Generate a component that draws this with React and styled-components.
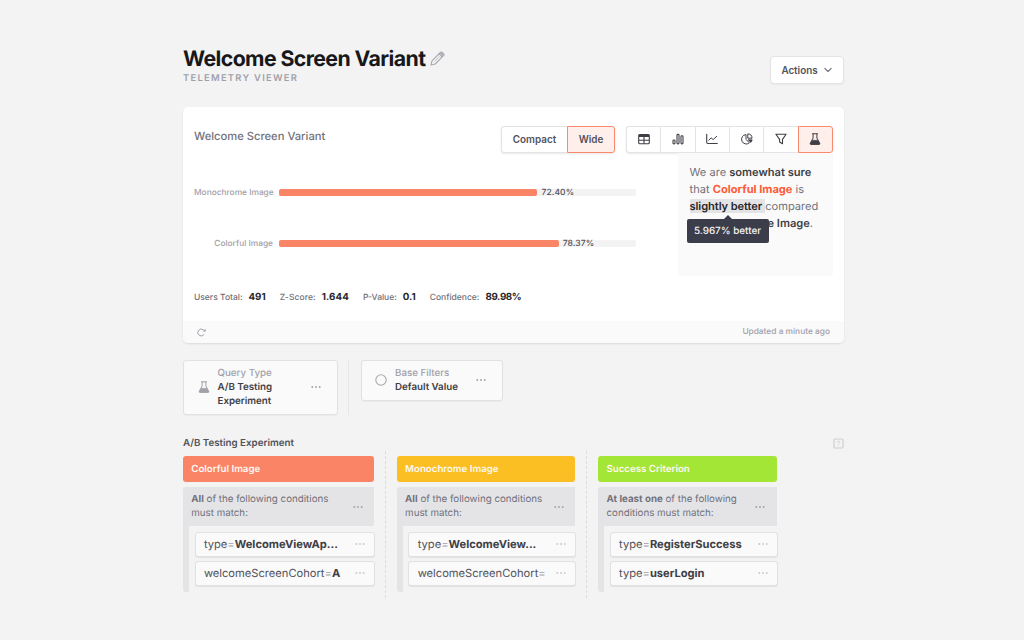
import React from 'react';
import styled, { createGlobalStyle, css } from 'styled-components';

const Global = createGlobalStyle`
  * { box-sizing: border-box; }
  body {
    margin: 0;
    background: #f3f3f3;
    font-family: Inter, "Liberation Sans", sans-serif;
    color: #3f3f46;
    -webkit-font-smoothing: antialiased;
    text-rendering: geometricPrecision;
  }
`;

const Page = styled.main`
  width: 661px;
  height: 640px;
  margin-left: 183px;
  padding-top: 45px;
  overflow: visible;
`;

const Header = styled.header`
  display: flex;
  justify-content: space-between;
  height: 62px;
`;
const TitleRow = styled.div`
  display: flex;
  align-items: center;
  gap: 4.5px;
  height: 26px;
`;
const Title = styled.h1`
  margin: 0;
  padding-top: 1px;
  font-size: 21.3px;
  line-height: 26px;
  font-weight: 700;
  letter-spacing: -0.6px;
  color: #18181b;
  white-space: nowrap;
`;
const Subtitle = styled.div`
  margin-top: 1px;
  font-size: 9.4px;
  line-height: 13px;
  font-weight: 600;
  letter-spacing: 1.28px;
  color: #a1a1aa;
`;
const ActionsButton = styled.button`
  display: flex;
  align-items: center;
  justify-content: center;
  gap: 6px;
  width: 74px;
  height: 28px;
  margin: 11px 0 0;
  padding: 0 1px 0 0;
  border: 1px solid #e4e4e7;
  border-radius: 4px;
  background: #fff;
  box-shadow: 0 1px 2px #0000000d;
  font: 600 9.85px Inter, sans-serif;
  color: #52525b;
`;

const Card = styled.section`
  height: 236px;
  border-radius: 5px;
  background: #fff;
  box-shadow: 0 1px 2px #0000001c;
  overflow: hidden;
`;
const CardTop = styled.div`
  display: flex;
  align-items: flex-start;
  height: 46px;
  padding: 19px 11px 0 11px;
`;
const CardTitle = styled.h2`
  flex: 1;
  margin: 0;
  padding-top: 1px;
  font-size: 11.2px;
  line-height: 18px;
  font-weight: 500;
  color: #71717a;
`;
const Segments = styled.div`
  display: flex;
  height: 27px;
  margin-left: ${(p) => p.$gap || 0}px;
  border-radius: 3px;
  background: #fff;
  box-shadow: 0 1px 2px #00000017;
`;
const Segment = styled.button`
  display: flex;
  align-items: center;
  justify-content: center;
  width: ${(p) => p.$w}px;
  height: 27px;
  margin: 0;
  padding: 0 0 1px;
  border: 1px solid #e4e4e7;
  border-right-width: 0;
  background: #fff;
  font: 600 9.9px Inter, sans-serif;
  color: #52525b;
  &:first-child { border-radius: 3px 0 0 3px; }
  ${(p) => p.$active && css`
    border: 1px solid #fa8a6b;
    border-radius: 0 3px 3px 0;
    background: #ffefeb;
  `}
`;
const CardBody = styled.div`
  display: flex;
  justify-content: space-between;
  height: 123px;
  padding: 0 11px 0 11px;
`;
const Chart = styled.div`
  width: 442px;
  padding-top: 32px;
`;
const BarRow = styled.div`
  display: flex;
  align-items: center;
  height: 14px;
  margin-bottom: 37.5px;
`;
const BarLabel = styled.div`
  flex: none;
  width: 79px;
  margin-right: 6px;
  padding-top: 1px;
  line-height: 12px;
  text-align: right;
  white-space: nowrap;
  font-size: 8.35px;
  font-weight: 500;
  color: #a1a1aa;
`;
const Track = styled.div`
  display: flex;
  align-items: center;
  width: 357px;
  height: 7px;
  border-radius: 2px;
  background: #f3f3f3;
`;
const Fill = styled.div`
  height: 7px;
  border-radius: 2px;
  background: #fa8466;
`;
const Percent = styled.span`
  margin-left: 4px;
  padding-top: 1px;
  line-height: 12px;
  font-size: 8.5px;
  font-weight: 500;
  letter-spacing: 0.1px;
  color: #52525b;
`;

const Verdict = styled.div`
  width: 155px;
  height: 123px;
  padding: 11px 0 0 11.5px;
  border-radius: 0 0 3px 3px;
  background: #fafafa;
  font-size: 11.1px;
  line-height: 17px;
  color: #71717a;
  white-space: nowrap;
  strong { font-weight: 600; color: #3f3f46; }
`;
const Winner = styled.b`
  font-weight: 700;
  color: #ff5a36;
`;
const Marked = styled.span`
  position: relative;
  display: inline-block;
  height: 14px;
  line-height: 14px;
  padding-right: 3px;
  background: #e4e4e7;
  font-weight: 600;
  letter-spacing: -0.07px;
  color: #27272a;
`;
const Tooltip = styled.span`
  position: absolute;
  left: -3px;
  top: 20px;
  width: 82px;
  height: 24px;
  line-height: 25px;
  border-radius: 2px;
  background: #3b3d4a;
  color: #f4f4f5;
  font-size: 9.9px;
  font-weight: 500;
  letter-spacing: 0;
  text-align: center;
  &::before {
    content: '';
    position: absolute;
    left: 36px;
    top: -4px;
    border: 5px solid transparent;
    border-top: 0;
    border-bottom-color: #3b3d4a;
  }
`;

const Stats = styled.div`
  display: flex;
  align-items: center;
  height: 45px;
  padding: 0 11px 3px;
`;
const Stat = styled.div`
  display: flex;
  align-items: baseline;
  gap: 6px;
  margin-right: 14px;
  white-space: nowrap;
  font-size: 8.5px;
  font-weight: 500;
  color: #71717a;
  b { font-size: 9.75px; font-weight: 700; color: #27272a; }
  &:nth-child(2) { letter-spacing: 0.1px; }
  &:last-child b { letter-spacing: -0.35px; }
`;
const CardFooter = styled.footer`
  display: flex;
  align-items: center;
  justify-content: space-between;
  height: 22px;
  padding: 0 14px;
  background: #fafafa;
  font-size: 8.35px;
  font-weight: 500;
  color: #a1a1aa;
`;

const Queries = styled.section`
  display: flex;
  align-items: flex-start;
  margin-top: 16.5px;
  height: 55px;
`;
const QueryCard = styled.div`
  display: flex;
  align-items: center;
  width: ${(p) => p.$w}px;
  height: ${(p) => p.$h}px;
  padding: 0 16.5px 0 13.5px;
  border: 1px solid #e1e1e4;
  border-radius: 3px;
  background: #fafafa;
  box-shadow: 0 1px 1px #00000008;
`;
const QueryText = styled.div`
  flex: 1;
  margin-left: 8px;
  padding-top: 1px;
  font-size: 9.75px;
  line-height: 14px;
  font-weight: 500;
  color: #a1a1aa;
  strong { display: block; width: 76px; font-weight: 600; color: #3f3f46; }
`;
const Separator = styled.div`
  width: 1px;
  height: 55px;
  margin: 0 11.5px 0 10px;
  background: #e6e6e8;
`;

const ExperimentHead = styled.div`
  display: flex;
  align-items: center;
  justify-content: space-between;
  height: 14px;
  margin-top: 21.5px;
  font-size: 9.75px;
  line-height: 14px;
  font-weight: 600;
  color: #52525b;
  span { padding-top: 1px; }
`;
const Columns = styled.section`
  display: flex;
  align-items: flex-start;
`;
const Column = styled.div`
  width: ${(p) => p.$w}px;
  padding-top: 6px;
`;
const Dotted = styled.div`
  height: 147px;
  margin: 1px 10.8px 0 11px;
  border-left: 1px dashed #dcdcdf;
`;
const ColumnTitle = styled.div`
  height: 25.5px;
  padding-left: 8.3px;
  border-radius: 3px;
  background: ${(p) => p.$color};
  font-size: 9.7px;
  line-height: 27px;
  font-weight: 600;
  color: #fff8f2;
`;
const Condition = styled.div`
  display: flex;
  align-items: center;
  justify-content: space-between;
  height: 39px;
  margin-top: 5.5px;
  padding: 0 11.5px 0 8.3px;
  border-radius: 3px 0 0 0;
  background: #e4e4e7;
  color: #71717a;
`;
const ConditionText = styled.div`
  padding-top: 1.5px;
`;
const ConditionLine = styled.div`
  font-size: 9.75px;
  line-height: 14px;
  white-space: nowrap;
  b { font-weight: 700; }
`;
const Rules = styled.div`
  display: flex;
  flex-direction: column;
  gap: 4px;
  height: 66px;
  margin-right: -1px;
  padding: 5.5px 0 0 5.6px;
  border-left: 6px solid #e4e4e7;
  border-radius: 0 0 0 3px;
`;
const Rule = styled.div`
  display: flex;
  align-items: center;
  justify-content: space-between;
  height: 25px;
  padding: 0 9px 0 8.3px;
  border: 1px solid #e1e1e4;
  border-radius: 3px;
  background: #fafafa;
  box-shadow: 0 1px 1px #00000012;
  font-size: 11.15px;
  white-space: nowrap;
  color: #52525b;
  i { font-style: normal; color: #a1a1aa; }
  b { font-weight: 700; color: #3f3f46; }
`;

const Dots = ({ color = '#a1a1aa' }) => (
  <svg width="10" height="4" viewBox="0 0 10 4" fill={color}>
    <circle cx="1.3" cy="2" r="0.95" />
    <circle cx="5" cy="2" r="0.95" />
    <circle cx="8.7" cy="2" r="0.95" />
  </svg>
);
const Pencil = () => (
  <svg width="15" height="15" viewBox="0 0 15 15" fill="none" stroke="#a8a8b0" strokeWidth="1.1" strokeLinejoin="round">
    <path d="M1 14l1-4.2L10.3 1.5a1.5 1.5 0 0 1 2.1 0l1.1 1.1a1.5 1.5 0 0 1 0 2.1L5.2 13z" />
    <path d="M9 2.8l3.2 3.2" />
    <path d="M4.6 10.4l5.2-5.2" strokeWidth="0.6" />
    <path d="M10.6 2l2.4 2.4" strokeWidth="1.8" />
  </svg>
);
const Flask = ({ size = 12, color = '#3f3f46' }) => (
  <svg width={size} height={size} viewBox="0 0 12 12" fill="none" stroke={color} strokeLinejoin="round">
    <path d="M3 .8h6" strokeWidth="1.1" />
    <path d="M4.1 1v4L1.3 10.4q-.3 1 .7 1h8q1 0 .7-1L7.9 5V1" strokeWidth="1" />
    <path d="M3 7.2h6l1.6 3.4q.2.7-.6.7H2q-.8 0-.6-.7z" fill={color} strokeWidth=".4" />
  </svg>
);
const TableIcon = () => (
  <svg width="12" height="12" viewBox="0 0 12 12" fill="none" stroke="#3f3f46">
    <rect x=".7" y="1.5" width="10.6" height="9.2" rx="1" strokeWidth="1.1" />
    <path d="M.8 2.8h10.4" strokeWidth="2.2" />
    <path d="M.8 7.2h10.4M6 3v7.7" strokeWidth="1.1" />
  </svg>
);
const BarsIcon = () => (
  <svg width="12" height="12" viewBox="0 0 12 12" fill="none" stroke="#3f3f46" strokeWidth="1.1">
    <rect x="1" y="7" width="2" height="3.9" rx=".8" />
    <rect x="5" y="1.4" width="2" height="9.5" rx=".8" />
    <rect x="9" y="2.8" width="2" height="8.1" rx=".8" />
  </svg>
);
const LineIcon = () => (
  <svg width="12" height="12" viewBox="0 0 12 12" fill="none" stroke="#3f3f46" strokeLinecap="round" strokeLinejoin="round">
    <path d="M.7 1.3v8q0 1.2 1.2 1.2h9.4" strokeWidth="1.1" />
    <path d="M2.8 7.2l2.3-2.4 2 1.8 3.6-3.3" strokeWidth="1" />
  </svg>
);
const PieIcon = () => (
  <svg width="12" height="12" viewBox="0 0 12 12" fill="none" stroke="#3f3f46" strokeLinejoin="round">
    <path d="M5 1.6a4.7 4.7 0 1 0 3.4 8.2L5 6.4z" />
    <path d="M6.8.9v4.3h4.2A4.3 4.3 0 0 0 6.8.9z" />
    <path d="M7 6.7h4.2a4.6 4.6 0 0 1-1.3 2.8z" fill="#3f3f46" strokeWidth=".6" />
  </svg>
);
const FunnelIcon = () => (
  <svg width="12" height="12" viewBox="0 0 12 12" fill="none" stroke="#3f3f46" strokeWidth="1.1" strokeLinejoin="round">
    <path d="M.9 1.2h10.2L7.5 6.4v4.4L4.6 9V6.4z" />
  </svg>
);
const Chevron = () => (
  <svg width="8" height="6" viewBox="0 0 8 6" fill="none" stroke="#71717a" strokeWidth="1.1" strokeLinecap="round" strokeLinejoin="round">
    <path d="M.8 1.3L4 4.5l3.2-3.2" />
  </svg>
);
const Refresh = () => (
  <svg width="9" height="9" viewBox="0 0 9 9" fill="none" stroke="#a1a1aa" strokeWidth="1">
    <path d="M7.1 6.3A3.4 3.4 0 1 1 6.4 1.9L7.6 3" />
    <path d="M8.6.7v2.9H5.7z" fill="#a1a1aa" stroke="none" />
  </svg>
);
const Ring = () => (
  <svg width="12" height="12" viewBox="0 0 12 12" fill="none" stroke="#a9a9b1" strokeWidth="1.1">
    <circle cx="6" cy="6" r="5.2" />
  </svg>
);
const Help = () => (
  <svg width="11" height="11" viewBox="0 0 11 11" fill="none" stroke="#cfcfd3">
    <rect x="1" y="1" width="9" height="9" rx="1" strokeWidth="1.2" />
    <path d="M4.1 4.3q.1-1.2 1.4-1.2t1.4 1.1q0 .8-1.4 1.5v.6M5.5 7.2v.9" strokeWidth=".9" />
  </svg>
);

const bars = [
  { label: 'Monochrome Image', value: 72.4 },
  { label: 'Colorful Image', value: 78.37 },
];
const stats = [
  ['Users Total:', '491'],
  ['Z-Score:', '1.644'],
  ['P-Value:', '0.1'],
  ['Confidence:', '89.98%'],
];
const views = [TableIcon, BarsIcon, LineIcon, PieIcon, FunnelIcon, Flask];
const columns = [
  {
    title: 'Colorful Image', color: '#fa8466', width: 191, match: 'All', lines: [' of the following conditions', 'must match:'],
    rules: [['type', 'WelcomeViewAp...'], ['welcomeScreenCohort', 'A']],
  },
  {
    title: 'Monochrome Image', color: '#fbbf24', width: 178.6, match: 'All', lines: [' of the following conditions', 'must match:'],
    rules: [['type', 'WelcomeView...'], ['welcomeScreenCohort', '']],
  },
  {
    title: 'Success Criterion', color: '#a3e635', width: 178.7, match: 'At least one', lines: [' of the following', 'conditions must match:'],
    rules: [['type', 'RegisterSuccess'], ['type', 'userLogin']],
  },
];

export default function App() {
  return (
    <>
      <Global />
      <Page>
        <Header>
          <div>
            <TitleRow>
              <Title>Welcome Screen Variant</Title>
              <Pencil />
            </TitleRow>
            <Subtitle>TELEMETRY VIEWER</Subtitle>
          </div>
          <ActionsButton>Actions <Chevron /></ActionsButton>
        </Header>

        <Card>
          <CardTop>
            <CardTitle>Welcome Screen Variant</CardTitle>
            <Segments>
              <Segment $w={66}>Compact</Segment>
              <Segment $w={48} $active>Wide</Segment>
            </Segments>
            <Segments $gap={11}>
              {views.map((Icon, i) => (
                <Segment key={i} $w={i === 5 ? 35.5 : 34.3} $active={i === 5}><Icon /></Segment>
              ))}
            </Segments>
          </CardTop>
          <CardBody>
            <Chart>
              {bars.map((bar) => (
                <BarRow key={bar.label}>
                  <BarLabel>{bar.label}</BarLabel>
                  <Track>
                    <Fill style={{ width: `${bar.value}%` }} />
                    <Percent>{bar.value.toFixed(2)}%</Percent>
                  </Track>
                </BarRow>
              ))}
            </Chart>
            <Verdict>
              We are <strong>somewhat sure</strong><br />
              that <Winner>Colorful Image</Winner> is<br />
              <Marked>slightly better<Tooltip>5.967% better</Tooltip></Marked>compared<br />
              to <strong>Monochrome Image</strong>.
            </Verdict>
          </CardBody>
          <Stats>
            {stats.map(([label, value]) => (
              <Stat key={label}>{label} <b>{value}</b></Stat>
            ))}
          </Stats>
          <CardFooter><Refresh />Updated a minute ago</CardFooter>
        </Card>

        <Queries>
          <QueryCard $w={155} $h={55}>
            <Flask color="#a1a1aa" />
            <QueryText>Query Type<strong>A/B Testing Experiment</strong></QueryText>
            <Dots />
          </QueryCard>
          <Separator />
          <QueryCard $w={142.5} $h={41}>
            <Ring />
            <QueryText>Base Filters<strong>Default Value</strong></QueryText>
            <Dots />
          </QueryCard>
        </Queries>

        <ExperimentHead><span>A/B Testing Experiment</span><Help /></ExperimentHead>
        <Columns>
          {columns.map((col, i) => (
            <React.Fragment key={col.title}>
              {i > 0 && <Dotted />}
              <Column $w={col.width}>
                <ColumnTitle $color={col.color}>{col.title}</ColumnTitle>
                <Condition>
                  <ConditionText>
                    <ConditionLine><b>{col.match}</b>{col.lines[0]}</ConditionLine>
                    <ConditionLine>{col.lines[1]}</ConditionLine>
                  </ConditionText>
                  <Dots />
                </Condition>
                <Rules>
                  {col.rules.map(([key, value]) => (
                    <Rule key={key + value}>
                      <span>{key}<i>=</i><b>{value}</b></span>
                      <Dots color="#c9c9ce" />
                    </Rule>
                  ))}
                </Rules>
              </Column>
            </React.Fragment>
          ))}
        </Columns>
      </Page>
    </>
  );
}
